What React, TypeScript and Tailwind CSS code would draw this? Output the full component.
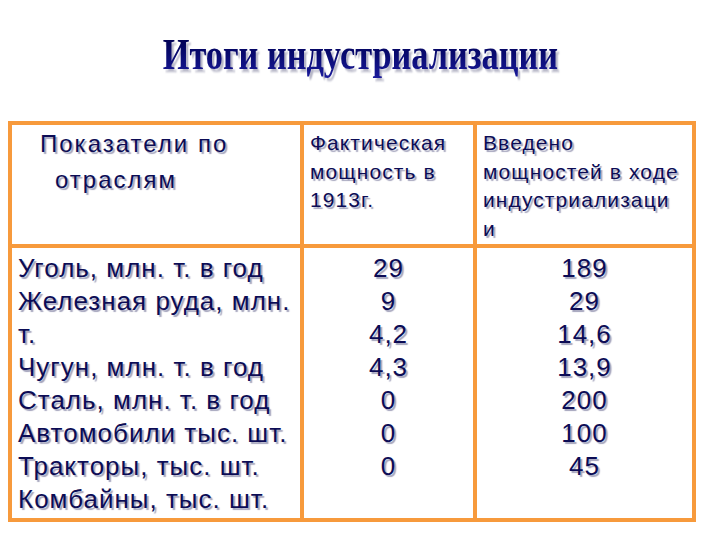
const rows = [
  { name: 'Уголь, млн. т. в год', before: '29', after: '189' },
  { name: 'Железная руда, млн.', before: '9', after: '29' },
  { name: 'т.', before: '4,2', after: '14,6' },
  { name: 'Чугун, млн. т. в год', before: '4,3', after: '13,9' },
  { name: 'Сталь, млн. т. в год', before: '0', after: '200' },
  { name: 'Автомобили тыс. шт.', before: '0', after: '100' },
  { name: 'Тракторы, тыс. шт.', before: '0', after: '45' },
  { name: 'Комбайны, тыс. шт.', before: '', after: '' },
];

const shadow = '[text-shadow:2px_2px_1px_#a4a4bc]';

export default function App() {
  return (
    <div className="w-[720px] h-[540px] bg-white overflow-hidden font-['Liberation_Sans',Arial,sans-serif] text-[#0c0c55]">
      {/* Title */}
      <div className="h-[121px] flex justify-center pt-[33px]">
        <h1 className="font-['Liberation_Serif',serif] font-bold text-[44px] leading-none scale-x-[0.78] whitespace-nowrap bg-gradient-to-b from-[#00004a] via-[#1a1a9a] to-[#2a2ad0] bg-clip-text text-transparent [filter:drop-shadow(3px_3px_1px_#b8b8c8)]">
          Итоги индустриализации
        </h1>
      </div>

      {/* Table */}
      <div className="ml-[8px] w-[688px] h-[401px] bg-[#f79a3c] p-[4px] grid grid-cols-[288px_169px_215px] grid-rows-[119px_270px] gap-[4px]">
        <div className={`bg-white pl-[28px] pt-[1px] text-[24px] leading-[36px] tracking-[2px] whitespace-nowrap ${shadow}`}>
          <div>Показатели по</div>
          <div className="pl-[15px]">отраслям</div>
        </div>
        <div className={`bg-white pl-[6px] pt-[4px] text-[21px] leading-[28.5px] tracking-[1.1px] whitespace-nowrap ${shadow}`}>
          <div>Фактическая</div>
          <div>мощность в</div>
          <div>1913г.</div>
        </div>
        <div className={`bg-white pl-[6px] pt-[4px] text-[21px] leading-[28.5px] tracking-[1.1px] whitespace-nowrap ${shadow}`}>
          <div>Введено</div>
          <div>мощностей в ходе</div>
          <div>индустриализаци</div>
          <div>и</div>
        </div>

        <div className={`bg-white pl-[6px] pt-[4px] text-[26px] leading-[33px] tracking-[1px] whitespace-nowrap ${shadow}`}>
          {rows.map((r) => (
            <div key={r.name}>{r.name}</div>
          ))}
        </div>
        <div className={`bg-white pt-[4px] text-[26px] leading-[33px] tracking-[1px] text-center ${shadow}`}>
          {rows.filter((r) => r.before).map((r) => (
            <div key={r.name}>{r.before}</div>
          ))}
        </div>
        <div className={`bg-white pt-[4px] text-[26px] leading-[33px] tracking-[1px] text-center ${shadow}`}>
          {rows.filter((r) => r.after).map((r) => (
            <div key={r.name}>{r.after}</div>
          ))}
        </div>
      </div>
    </div>
  );
}
